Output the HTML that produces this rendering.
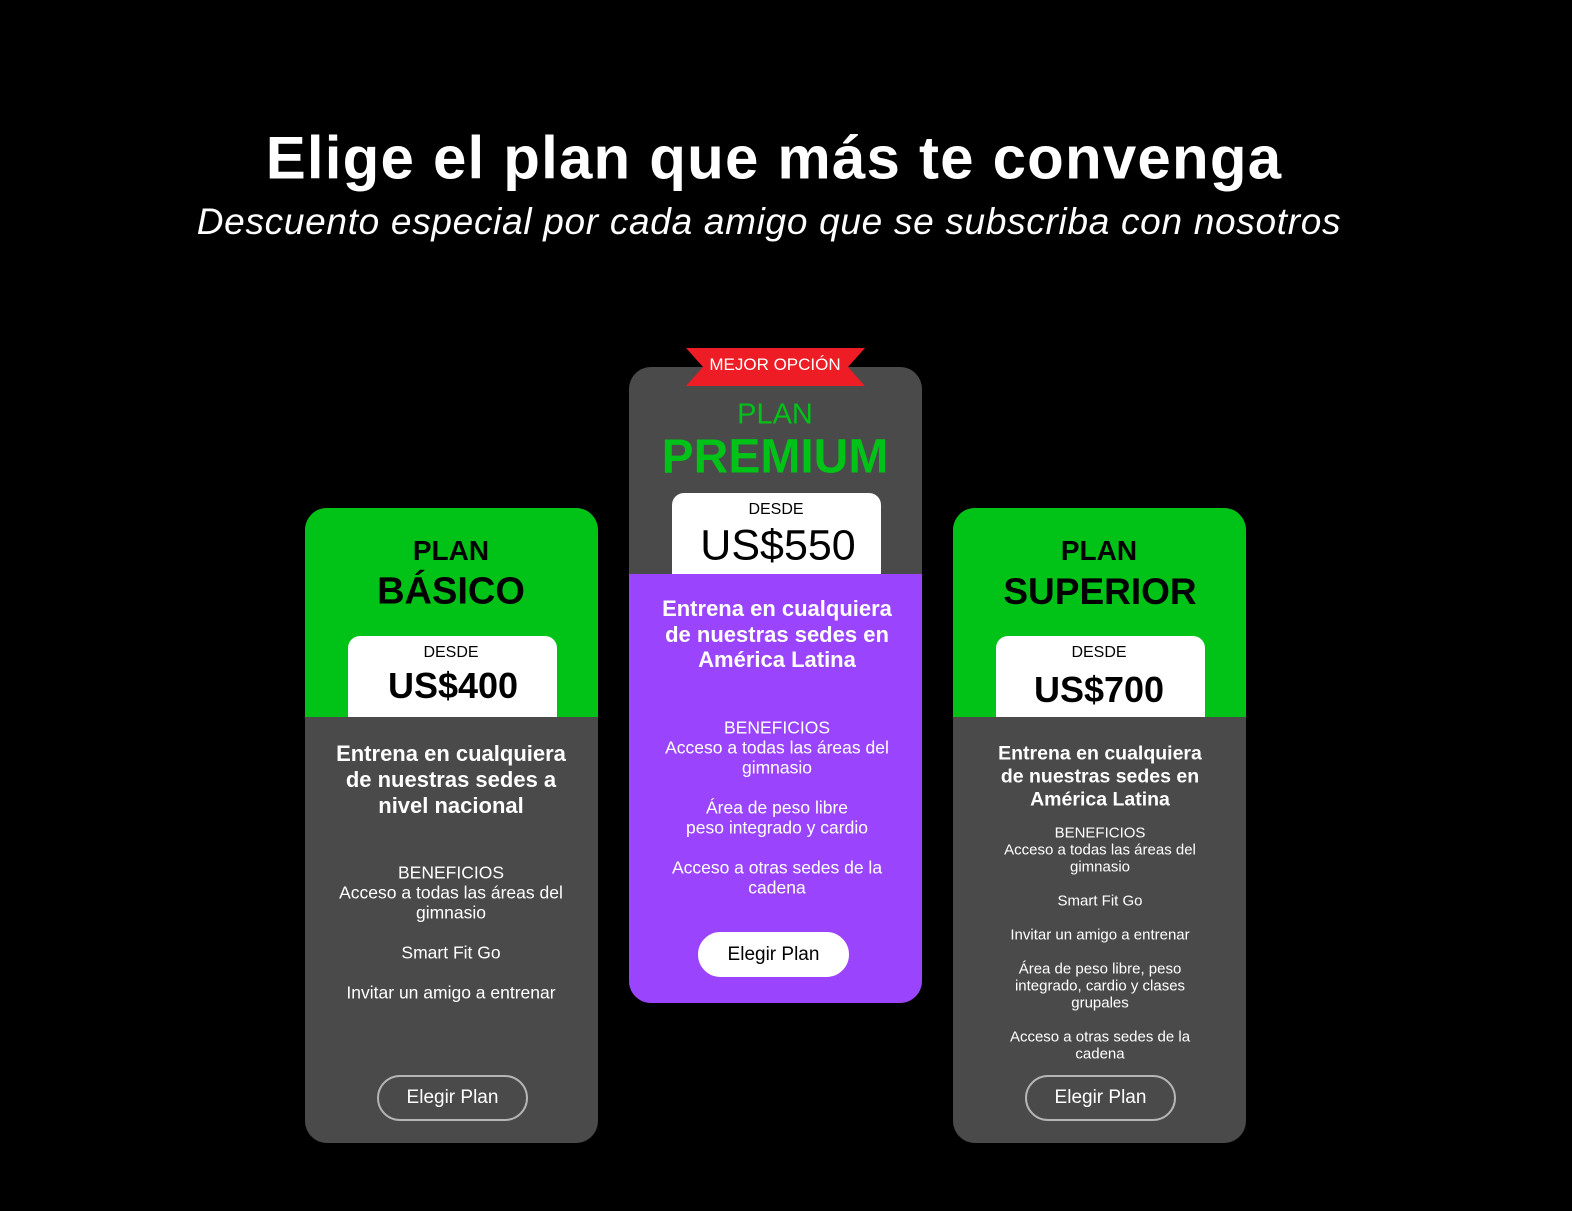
<!DOCTYPE html>
<html><head><meta charset="utf-8"><style>
*{margin:0;padding:0;box-sizing:border-box}
body{width:1572px;height:1211px;background:#000;position:relative;overflow:hidden;font-family:"Liberation Sans",sans-serif;color:#fff}
.a{position:absolute;white-space:nowrap;text-align:center;transform:translate(-50%,-50%)}
.card{position:absolute;width:293px;border-radius:22px;overflow:hidden;background:#4a4a4a}
.box{position:absolute;background:#fff;border-radius:12px 12px 0 0;width:209px;height:81px}
.btn{position:absolute;width:151px;height:46px;border-radius:23px;border:2px solid #b5b5b5;color:#fff;font-size:19px;line-height:42px;text-align:center}
.b{font-weight:bold}
.s16{font-size:17.5px}.s14{font-size:15px}
.d{font-size:16px}
</style></head><body>
<div class="a b" style="left:774px;top:158px;font-size:60px;letter-spacing:1.2px">Elige el plan que más te convenga</div>
<div class="a" style="left:769px;top:222px;font-size:37px;font-style:italic;letter-spacing:0.7px">Descuento especial por cada amigo que se subscriba con nosotros</div>

<!-- left card -->
<div class="card" style="left:305px;top:508px;height:635px"><div style="height:209px;background:#00c217"></div></div>
<div class="box" style="left:348px;top:636px"></div>
<div class="a b" style="left:451px;top:551px;font-size:28px;color:#000">PLAN</div>
<div class="a b" style="left:451px;top:592px;font-size:38px;color:#000">BÁSICO</div>
<div class="a d" style="left:451px;top:653px;color:#000">DESDE</div>
<div class="a b" style="left:453px;top:686px;font-size:36px;color:#000">US$400</div>
<div class="a b" style="left:451px;top:754px;font-size:22px">Entrena en cualquiera</div>
<div class="a b" style="left:451px;top:780px;font-size:22px">de nuestras sedes a</div>
<div class="a b" style="left:451px;top:806px;font-size:22px">nivel nacional</div>
<div class="a s16" style="left:451px;top:873px">BENEFICIOS</div>
<div class="a s16" style="left:451px;top:893px">Acceso a todas las áreas del</div>
<div class="a s16" style="left:451px;top:913px">gimnasio</div>
<div class="a s16" style="left:451px;top:953px">Smart Fit Go</div>
<div class="a s16" style="left:451px;top:993px">Invitar un amigo a entrenar</div>
<div class="btn" style="left:377px;top:1075px">Elegir Plan</div>

<!-- middle card -->
<div class="card" style="left:629px;top:367px;height:636px"><div style="position:absolute;top:207px;left:0;right:0;bottom:0;background:#9a45fd"></div></div>
<svg style="position:absolute;left:686px;top:348px" width="179" height="38"><polygon points="0,0 179,0 162,19 179,38 0,38 17,19" fill="#ee1c24"/></svg>
<div class="a" style="left:775px;top:365px;font-size:17px">MEJOR OPCIÓN</div>
<div class="a" style="left:775px;top:415px;font-size:29px;color:#00c217">PLAN</div>
<div class="a b" style="left:775px;top:457px;font-size:48px;color:#00c217">PREMIUM</div>
<div class="box" style="left:672px;top:493px"></div>
<div class="a d" style="left:776px;top:510px;color:#000">DESDE</div>
<div class="a" style="left:778px;top:546px;font-size:43px;color:#000">US$550</div>
<div class="a b" style="left:777px;top:609px;font-size:22px">Entrena en cualquiera</div>
<div class="a b" style="left:777px;top:635px;font-size:22px">de nuestras sedes en</div>
<div class="a b" style="left:777px;top:660px;font-size:22px">América Latina</div>
<div class="a s16" style="left:777px;top:728px">BENEFICIOS</div>
<div class="a s16" style="left:777px;top:748px">Acceso a todas las áreas del</div>
<div class="a s16" style="left:777px;top:768px">gimnasio</div>
<div class="a s16" style="left:777px;top:808px">Área de peso libre</div>
<div class="a s16" style="left:777px;top:828px">peso integrado y cardio</div>
<div class="a s16" style="left:777px;top:868px">Acceso a otras sedes de la</div>
<div class="a s16" style="left:777px;top:888px">cadena</div>
<div class="btn" style="left:698px;top:932px;height:45px;background:#fff;border-color:#fff;color:#000">Elegir Plan</div>

<!-- right card -->
<div class="card" style="left:953px;top:508px;height:635px"><div style="height:209px;background:#00c217"></div></div>
<div class="box" style="left:996px;top:636px"></div>
<div class="a b" style="left:1099px;top:551px;font-size:28px;color:#000">PLAN</div>
<div class="a b" style="left:1100px;top:592px;font-size:37px;color:#000">SUPERIOR</div>
<div class="a d" style="left:1099px;top:653px;color:#000">DESDE</div>
<div class="a b" style="left:1099px;top:690px;font-size:36px;color:#000">US$700</div>
<div class="a b" style="left:1100px;top:754px;font-size:19.5px">Entrena en cualquiera</div>
<div class="a b" style="left:1100px;top:777px;font-size:19.5px">de nuestras sedes en</div>
<div class="a b" style="left:1100px;top:800px;font-size:19.5px">América Latina</div>
<div class="a s14" style="left:1100px;top:833px">BENEFICIOS</div>
<div class="a s14" style="left:1100px;top:850px">Acceso a todas las áreas del</div>
<div class="a s14" style="left:1100px;top:867px">gimnasio</div>
<div class="a s14" style="left:1100px;top:901px">Smart Fit Go</div>
<div class="a s14" style="left:1100px;top:935px">Invitar un amigo a entrenar</div>
<div class="a s14" style="left:1100px;top:969px">Área de peso libre, peso</div>
<div class="a s14" style="left:1100px;top:986px">integrado, cardio y clases</div>
<div class="a s14" style="left:1100px;top:1003px">grupales</div>
<div class="a s14" style="left:1100px;top:1037px">Acceso a otras sedes de la</div>
<div class="a s14" style="left:1100px;top:1054px">cadena</div>
<div class="btn" style="left:1025px;top:1075px">Elegir Plan</div>
</body></html>
